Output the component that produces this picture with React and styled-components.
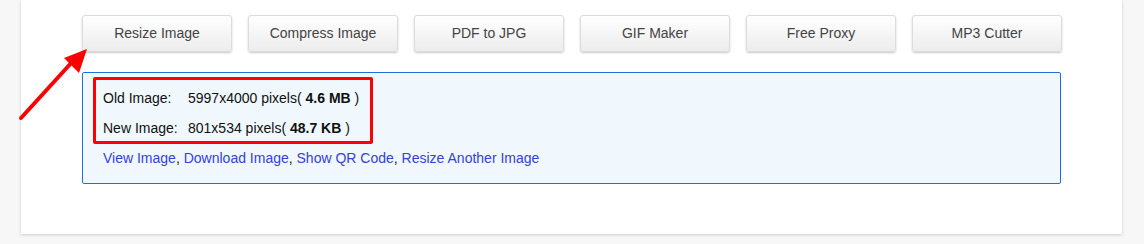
import styled, { createGlobalStyle } from "styled-components";

const GlobalStyle = createGlobalStyle`
  body {
    margin: 0;
    background: #f7f7f7;
    font-family: "Liberation Sans", Arial, sans-serif;
  }
`;

const tools = ["Resize Image", "Compress Image", "PDF to JPG", "GIF Maker", "Free Proxy", "MP3 Cutter"];

export default function App() {
  return (
    <>
      <GlobalStyle />
      <StyledPage>
        <StyledCard>
          <StyledToolbar>
            {tools.map((t) => (
              <StyledToolButton key={t}>{t}</StyledToolButton>
            ))}
          </StyledToolbar>
          <StyledResult>
            <StyledHighlight>
              <StyledRow>
                <StyledLabel>Old Image:</StyledLabel>
                <span>5997x4000 pixels( <b>4.6 MB</b> )</span>
              </StyledRow>
              <StyledRow>
                <StyledLabel>New Image:</StyledLabel>
                <span>801x534 pixels( <b>48.7 KB</b> )</span>
              </StyledRow>
            </StyledHighlight>
            <StyledLinks>
              <a href="#">View Image</a>, <a href="#">Download Image</a>, <a href="#">Show QR Code</a>, <a href="#">Resize Another Image</a>
            </StyledLinks>
          </StyledResult>
        </StyledCard>
        <StyledArrow width="80" height="80" viewBox="0 0 80 80">
          <line x1="4" y1="72" x2="56" y2="15" stroke="#f00" strokeWidth="4" strokeLinecap="round" />
          <polygon points="70,3 47,12 62,27" fill="#f00" />
        </StyledArrow>
      </StyledPage>
    </>
  );
}

const StyledPage = styled.div`
  position: relative;
  height: 244px;
  overflow: hidden;
`;

const StyledCard = styled.div`
  margin-left: 21px;
  width: 1101px;
  background: #fff;
  box-shadow: 0 1px 3px rgba(0, 0, 0, 0.18);
  padding: 15px 0 50px 61px;
  box-sizing: border-box;
`;

const StyledToolbar = styled.div`
  display: flex;
  gap: 16px;
`;

const StyledToolButton = styled.button`
  width: 150px;
  height: 37px;
  border: 1px solid #dcdcdc;
  border-radius: 3px;
  background: linear-gradient(#ffffff, #ececec);
  box-shadow: 0 1px 2px rgba(0, 0, 0, 0.22);
  font-family: "Liberation Sans", Arial, sans-serif;
  font-size: 14px;
  color: #444;
  padding: 0 0 2px;
  cursor: pointer;
`;

const StyledResult = styled.div`
  margin-top: 20px;
  width: 979px;
  box-sizing: border-box;
  border: 1px solid #1e6fdc;
  border-radius: 2px;
  background: #f0f8fd;
  padding: 4px 10px 15px 10px;
  font-size: 14px;
  color: #111;
`;

const StyledHighlight = styled.div`
  width: 280px;
  box-sizing: border-box;
  border: 3px solid #f00;
  border-radius: 2px;
  padding: 5px 7px 0;
  display: flex;
  flex-direction: column;
  gap: 4px;
`;

const StyledRow = styled.div`
  display: flex;
  height: 26px;
  align-items: center;
`;

const StyledLabel = styled.span`
  width: 85px;
`;

const StyledLinks = styled.div`
  margin-top: 4px;
  padding-left: 10px;
  line-height: 20px;
  color: #111;
  a {
    color: #3341dd;
    text-decoration: none;
  }
`;

const StyledArrow = styled.svg`
  position: absolute;
  left: 17px;
  top: 46px;
`;
